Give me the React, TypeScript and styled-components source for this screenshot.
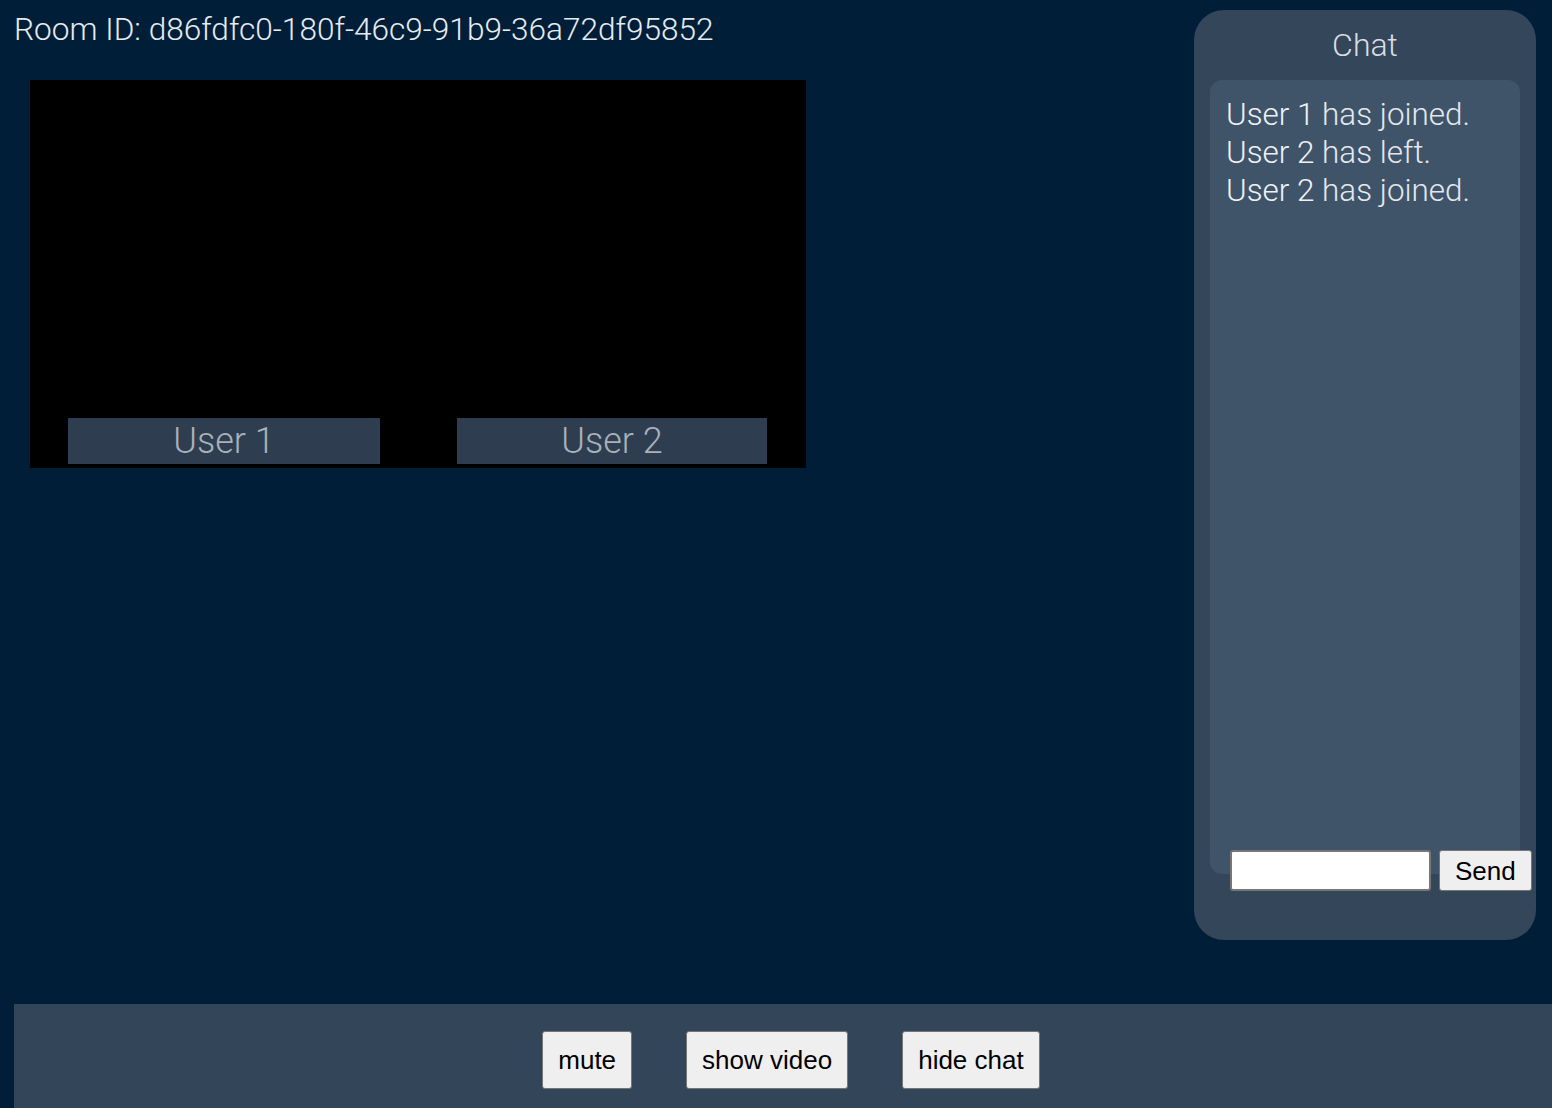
import React from 'react'
import styled, { createGlobalStyle } from 'styled-components'

const GlobalStyle = createGlobalStyle`
  html, body {
    margin: 0;
    padding: 0;
    background: #011e38;
    overflow: hidden;
  }
  body {
    font-family: 'Roboto Light', Roboto, 'Liberation Sans', sans-serif;
    font-weight: 300;
  }
`

const Page = styled.div`
  display: flex;
  flex-direction: column;
  height: 1108px;
`

const Top = styled.div`
  display: flex;
  justify-content: space-between;
  align-items: flex-start;
  height: 1004px;
  padding: 0 16px 0 14px;
  box-sizing: border-box;
`

const Main = styled.main`
  display: flex;
  flex-direction: column;
  padding-top: 11px;
`

const RoomId = styled.h1`
  margin: 0;
  font-size: 31.6px;
  font-weight: 300;
  line-height: 37px;
  color: #e6ebf0;
`

const VideoGrid = styled.section`
  display: grid;
  grid-template-columns: repeat(2, 388px);
  margin: 32px 0 0 16px;
  background: #000;
`

const Tile = styled.div`
  position: relative;
  height: 388px;
  background: #000;
`

const NameTag = styled.div<{ $w: number }>`
  position: absolute;
  left: 50%;
  bottom: 4px;
  transform: translateX(-50%);
  width: ${p => p.$w}px;
  height: 46px;
  background: #2e3e50;
  color: #a9b1ba;
  font-size: 36px;
  font-weight: 300;
  line-height: 46px;
  text-align: center;
`

const ChatPanel = styled.aside`
  position: relative;
  width: 342px;
  height: 930px;
  margin-top: 10px;
  padding: 17px 16px 66px;
  box-sizing: border-box;
  display: flex;
  flex-direction: column;
  background: #34465a;
  border-radius: 30px;
`

const ChatTitle = styled.h2`
  margin: 0 0 16px;
  font-size: 32px;
  font-weight: 300;
  line-height: 37px;
  text-align: center;
  color: #d9dee4;
`

const Messages = styled.div`
  flex: 1;
  padding: 16px 16px;
  background: #3f5469;
  border-radius: 12px;
`

const Message = styled.div`
  font-size: 31.4px;
  line-height: 38px;
  color: #e3e8ee;
  font-weight: 300;
  b {
    font-weight: 300;
    color: #eef2f6;
  }
`

const SendForm = styled.form`
  position: absolute;
  left: 36px;
  bottom: 49px;
  display: flex;
  gap: 8px;
`

const TextInput = styled.input`
  width: 201px;
  height: 41px;
  box-sizing: border-box;
  border: 2px solid #767676;
  border-radius: 3px;
  background: #fff;
  padding: 0 6px;
  font-size: 20px;
`

const Button = styled.button`
  font-family: 'Liberation Sans', Arial, sans-serif;
  font-size: 26px;
  font-weight: 400;
  color: #000;
  background: #efefef;
  border: 1px solid #767676;
  border-radius: 3px;
  padding: 0 15px;
  line-height: 30px;
`

const SendButton = styled(Button)`
  height: 41px;
  padding: 0 15px;
`

const ControlBar = styled.footer`
  flex: 1;
  margin-left: 14px;
  padding: 27px 0 0 16px;
  display: flex;
  justify-content: center;
  align-items: flex-start;
  gap: 54px;
  background: #334559;
`

const ControlButton = styled(Button)`
  height: 58px;
`

const messages = [
  { user: 'User 1', text: 'has joined.' },
  { user: 'User 2', text: 'has left.' },
  { user: 'User 2', text: 'has joined.' },
]

export default function App() {
  return (
    <Page>
      <GlobalStyle />
      <Top>
        <Main>
          <RoomId>Room ID: d86fdfc0-180f-46c9-91b9-36a72df95852</RoomId>
          <VideoGrid>
            <Tile>
              <NameTag $w={312}>User 1</NameTag>
            </Tile>
            <Tile>
              <NameTag $w={310}>User 2</NameTag>
            </Tile>
          </VideoGrid>
        </Main>
        <ChatPanel>
          <ChatTitle>Chat</ChatTitle>
          <Messages>
            {messages.map((m, i) => (
              <Message key={i}>
                <b>{m.user}</b> {m.text}
              </Message>
            ))}
          </Messages>
          <SendForm onSubmit={e => e.preventDefault()}>
            <TextInput type="text" />
            <SendButton type="submit">Send</SendButton>
          </SendForm>
        </ChatPanel>
      </Top>
      <ControlBar>
        <ControlButton>mute</ControlButton>
        <ControlButton>show video</ControlButton>
        <ControlButton>hide chat</ControlButton>
      </ControlBar>
    </Page>
  )
}
